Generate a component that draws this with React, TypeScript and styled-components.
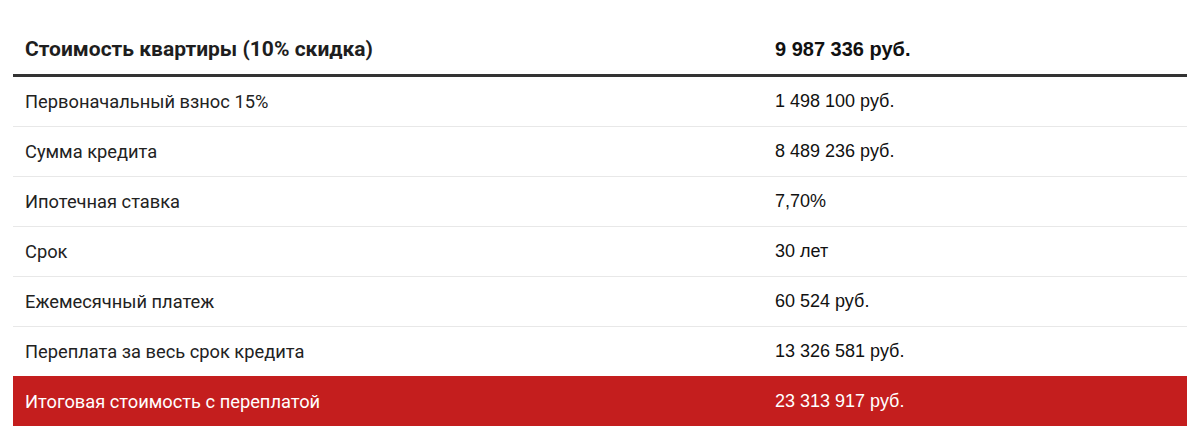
import styled, { createGlobalStyle } from "styled-components";

const GlobalStyle = createGlobalStyle`
  html, body {
    margin: 0;
    padding: 0;
    background: #fff;
  }
`;

const rows = [
  { label: "Первоначальный взнос 15%", value: "1 498 100 руб." },
  { label: "Сумма кредита", value: "8 489 236 руб." },
  { label: "Ипотечная ставка", value: "7,70%" },
  { label: "Срок", value: "30 лет" },
  { label: "Ежемесячный платеж", value: "60 524 руб." },
  { label: "Переплата за весь срок кредита", value: "13 326 581 руб." },
];

function App() {
  return (
    <>
      <GlobalStyle />
      <Wrapper>
        <Table>
          <HeadRow>
            <HeadLabel>Стоимость квартиры (10% скидка)</HeadLabel>
            <HeadValue>9 987 336 руб.</HeadValue>
          </HeadRow>
          {rows.map((r) => (
            <Row key={r.label}>
              <Label>{r.label}</Label>
              <Value>{r.value}</Value>
            </Row>
          ))}
          <Row $total>
            <Label $total>Итоговая стоимость с переплатой</Label>
            <Value $total>23 313 917 руб.</Value>
          </Row>
        </Table>
      </Wrapper>
    </>
  );
}
export default App;

export const Wrapper = styled.div`
  padding: 24px 13px 0 13px;
  width: 1174px;
`;

export const Table = styled.div`
  display: flex;
  flex-direction: column;
  width: 100%;
`;

export const HeadRow = styled.div`
  display: grid;
  grid-template-columns: 750px 1fr;
  align-items: center;
  height: 50px;
  border-bottom: 3px solid #333;
`;

export const HeadLabel = styled.span`
  font-family: Roboto, "Liberation Sans", sans-serif;
  font-size: 21px;
  font-weight: 700;
  color: #1e1e1e;
  padding-left: 12px;
`;

export const HeadValue = styled.span`
  font-family: "Liberation Sans", Arial, sans-serif;
  font-size: 20px;
  font-weight: 700;
  color: #111;
  padding-left: 12px;
`;

export const Row = styled.div<{ $total?: boolean }>`
  display: grid;
  grid-template-columns: 750px 1fr;
  align-items: center;
  height: ${(p) => (p.$total ? "50px" : "49px")};
  border-bottom: ${(p) => (p.$total ? "none" : "1px solid #e8e8e8")};
  background: ${(p) => (p.$total ? "#c41e1e" : "transparent")};
  margin-top: ${(p) => (p.$total ? "-1px" : "0")};
`;

export const Label = styled.span<{ $total?: boolean }>`
  font-family: Roboto, "Liberation Sans", sans-serif;
  font-size: 18.3px;
  font-weight: 400;
  color: ${(p) => (p.$total ? "#fff" : "#222")};
  padding-left: 12px;
`;

export const Value = styled.span<{ $total?: boolean }>`
  font-family: "Liberation Sans", Arial, sans-serif;
  font-size: 18px;
  font-weight: 400;
  color: ${(p) => (p.$total ? "#fff" : "#111")};
  padding-left: 12px;
`;
